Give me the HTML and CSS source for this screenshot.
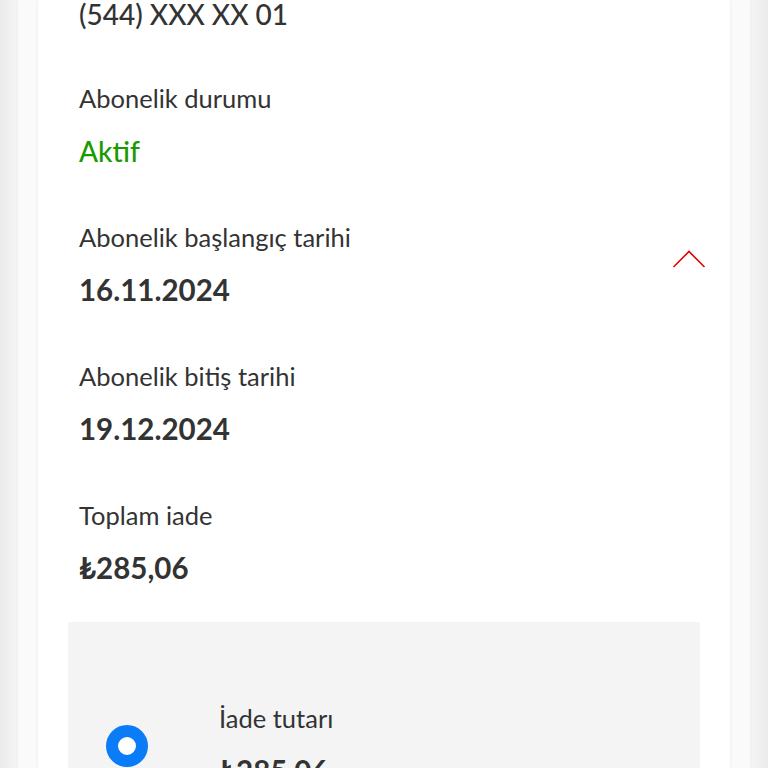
FILE: index.html
```html
<!DOCTYPE html>
<html lang="tr">

<head>
    <meta charset="UTF-8">
    <meta name="viewport" content="width=device-width, initial-scale=1.0">
    <title>Abonelik Detayı</title>
    <link rel="stylesheet" href="styles.css">
</head>

<body>
    <div class="panel">
        <div class="card">
            <div class="phone">(544) XXX XX 01</div>

            <div class="info">
                <div class="info-label">Abonelik durumu</div>
                <div class="info-value active">Aktif</div>
            </div>

            <div class="info info-toggle">
                <div>
                    <div class="info-label">Abonelik başlangıç tarihi</div>
                    <div class="info-value">16.11.2024</div>
                </div>
                <svg class="chevron" width="34" height="20" viewBox="0 0 34 20">
                    <polyline points="1.5,18 17,2.5 32.5,18" fill="none" stroke="#e60000" stroke-width="1.6" />
                </svg>
            </div>

            <div class="info">
                <div class="info-label">Abonelik bitiş tarihi</div>
                <div class="info-value">19.12.2024</div>
            </div>

            <div class="info">
                <div class="info-label">Toplam iade</div>
                <div class="info-value">₺285,06</div>
            </div>

            <div class="refund-box">
                <span class="radio"></span>
                <div class="refund-text">
                    <div class="info-label">İade tutarı</div>
                    <div class="info-value">₺285,06</div>
                </div>
            </div>
        </div>
    </div>
</body>

</html>
```

FILE: styles.css
```css
body {
    margin: 0;
    padding: 0;
    font-family: Lato, 'Noto Sans', sans-serif;
    color: #333;
    background: linear-gradient(to right, #ebebeb, #f6f6f6 18px, #f6f6f6 750px, #ebebeb);
    height: 768px;
    overflow: hidden;
}

.panel {
    margin: 0 18px;
    padding: 0 20px;
    background: #fafafa;
    height: 100%;
    box-shadow: 0 0 4px rgba(0, 0, 0, 0.06);
}

.card {
    background: #ffffff;
    height: 100%;
    padding: 0 30px;
    box-shadow: 0 0 3px rgba(0, 0, 0, 0.08);
}

.phone {
    padding-left: 11px;
    font-size: 28px;
    line-height: 28px;
    font-weight: 500;
    color: #333;
}

.info {
    padding-left: 11px;
    margin-top: 56px;
}

.info-label {
    font-size: 25.5px;
    line-height: 28px;
    color: #333;
}

.info-value {
    font-size: 29.5px;
    line-height: 32px;
    margin-top: 23px;
    font-weight: 700;
    color: #333;
}

.info-value.active {
    color: #1a9a00;
    font-weight: 500;
    font-size: 28px;
}

.info-toggle {
    display: flex;
    justify-content: space-between;
    align-items: center;
}

.chevron {
    margin-right: -6px;
    margin-top: -12px;
}

.refund-box {
    margin-top: 38px;
    background: #f4f4f4;
    padding: 82px 38px 40px;
    display: flex;
    align-items: center;
    gap: 71px;
}

.radio {
    width: 18px;
    height: 18px;
    border: 12px solid #0a7cf8;
    border-radius: 50%;
    background: #ffffff;
    flex-shrink: 0;
}
```
